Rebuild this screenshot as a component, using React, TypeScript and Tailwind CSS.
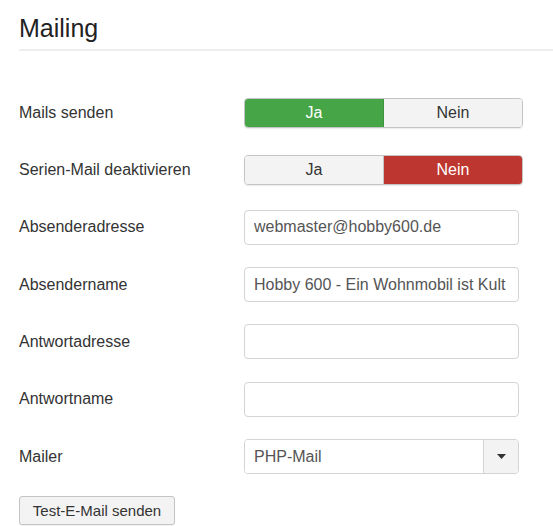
import React from 'react';

const font = { fontFamily: '"Liberation Sans", Arial, sans-serif' };

function Toggle({ value }: { value: 'ja' | 'nein' }) {
  const base = 'flex-1 flex items-center justify-center text-[16px]';
  return (
    <div className="flex w-[279px] h-[30px] rounded-[4px] overflow-hidden border border-[#c4c4c4] shadow-[0_1px_1px_rgba(0,0,0,0.08)]">
      <div
        className={
          base +
          ' ' +
          (value === 'ja' ? 'bg-[#46a546] text-white border-r border-[#3f943f]' : 'bg-[#f3f3f3] text-[#333] border-r border-[#c4c4c4]')
        }
      >
        Ja
      </div>
      <div className={base + ' ' + (value === 'nein' ? 'bg-[#bd362f] text-white' : 'bg-[#f3f3f3] text-[#333]')}>Nein</div>
    </div>
  );
}

function TextInput({ value }: { value?: string }) {
  return (
    <input
      readOnly
      value={value ?? ''}
      className="w-[275px] h-[35px] rounded-[4px] border border-[#d4d4d4] bg-white px-[9px] text-[16px] text-[#555] outline-none"
      style={font}
    />
  );
}

function Row({ label, children }: { label: string; children: React.ReactNode }) {
  return (
    <div className="flex items-center h-[57.33px]">
      <div className="w-[225px] text-[16px] text-[#333]">{label}</div>
      {children}
    </div>
  );
}

export default function App() {
  return (
    <div className="bg-white w-[553px] h-[526px] overflow-hidden pl-[19px]" style={font}>
      <div className="border-b-2 border-[#eee] pt-[15px] pb-[8px]">
        <h2 className="text-[25px] leading-[26px] text-[#222]">Mailing</h2>
      </div>
      <div className="mt-[33px]">
        <Row label="Mails senden">
          <Toggle value="ja" />
        </Row>
        <Row label="Serien-Mail deaktivieren">
          <Toggle value="nein" />
        </Row>
        <Row label="Absenderadresse">
          <TextInput value="webmaster@hobby600.de" />
        </Row>
        <Row label="Absendername">
          <TextInput value="Hobby 600 - Ein Wohnmobil ist Kult" />
        </Row>
        <Row label="Antwortadresse">
          <TextInput />
        </Row>
        <Row label="Antwortname">
          <TextInput />
        </Row>
        <Row label="Mailer">
          <div className="flex w-[275px] h-[35px] rounded-[4px] border border-[#d4d4d4] overflow-hidden">
            <div className="flex-1 flex items-center px-[9px] text-[16px] text-[#555] bg-white">PHP-Mail</div>
            <div className="w-[35px] flex items-center justify-center bg-[#f3f3f3] border-l border-[#d4d4d4]">
              <svg width="9" height="5" viewBox="0 0 9 5">
                <path d="M0 0 H9 L4.5 5 Z" fill="#333" />
              </svg>
            </div>
          </div>
        </Row>
      </div>
      <button className="mt-[11px] w-[156px] h-[29px] rounded-[3px] border border-[#c4c4c4] bg-[#f3f3f3] text-[15px] text-[#333] shadow-[0_1px_1px_rgba(0,0,0,0.06)]">
        Test-E-Mail senden
      </button>
    </div>
  );
}
